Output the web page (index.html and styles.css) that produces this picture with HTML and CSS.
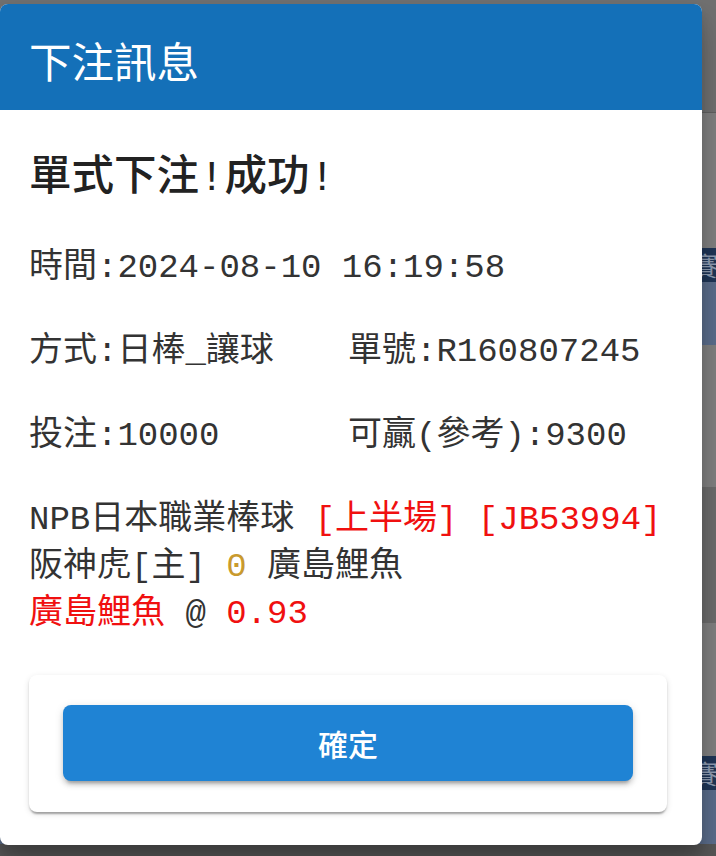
FILE: index.html
```html
<!DOCTYPE html>
<html lang="zh-Hant">

<head>
    <meta charset="UTF-8">
    <meta name="viewport" content="width=device-width, initial-scale=1.0">
    <title>下注訊息</title>
    <link rel="stylesheet" href="styles.css">
</head>

<body>
    <!-- page behind the overlay -->
    <div class="page">
        <div class="band band-top"></div>
        <div class="band band-light"></div>
        <div class="band band-navy"><span class="band-label">賽事</span></div>
        <div class="band band-slate"></div>
        <div class="band band-light band-mid"></div>
        <div class="band band-dark"></div>
        <div class="band band-light band-low"></div>
        <div class="band band-navy"><span class="band-label">賽事</span></div>
        <div class="band band-slate band-last"></div>
        <div class="band band-bottom"></div>
    </div>

    <div class="dialog">
        <div class="dialog-title">下注訊息</div>
        <div class="dialog-content">
            <h3 class="result">單式下注!成功!</h3>
            <p class="row">時間:2024-08-10 16:19:58</p>
            <div class="row cols">
                <span>方式:日棒_讓球</span>
                <span>單號:R160807245</span>
            </div>
            <div class="row cols">
                <span>投注:10000</span>
                <span>可贏(參考):9300</span>
            </div>
            <div class="row match">
                NPB日本職業棒球 <span class="red">[上半場]</span> <span class="red">[JB53994]</span><br>
                阪神虎[主] <span class="gold">0</span> 廣島鯉魚<br>
                <span class="red">廣島鯉魚</span> @ <span class="red">0.93</span>
            </div>
            <div class="actions">
                <button class="btn-ok">確定</button>
            </div>
        </div>
    </div>
</body>

</html>
```

FILE: styles.css
```css
body {
    margin: 0;
    padding: 0;
    overflow: hidden;
    font-family: "Liberation Mono", "Noto Sans CJK TC", monospace;
    background-color: #6f6f6f;
}

.page {
    display: flex;
    flex-direction: column;
}

.band {
    display: flex;
    align-items: center;
    overflow: hidden;
}

.band-top {
    height: 112px;
    background-color: #6f6f6f;
    border-bottom: 1px solid #5f5f5f;
}

.band-light {
    height: 135px;
    background-color: #7f7f7f;
}

.band-mid {
    height: 142px;
}

.band-low {
    height: 133px;
}

.band-navy {
    height: 34px;
    background-color: #1f3556;
}

.band-slate {
    height: 63px;
    background-color: #5a6c8a;
}

.band-last {
    height: 54px;
}

.band-dark {
    height: 136px;
    background-color: #6b6b6b;
}

.band-bottom {
    height: 20px;
    background-color: #575757;
}

.band-label {
    padding-left: 692px;
    font-family: "Noto Sans CJK TC", sans-serif;
    font-size: 26px;
    line-height: 34px;
    white-space: nowrap;
    color: #8e9bb0;
}

.dialog {
    position: absolute;
    top: 4px;
    left: 0;
    width: 702px;
    height: 841px;
    box-sizing: border-box;
    background-color: #fff;
    border-radius: 8px;
    overflow: hidden;
    box-shadow: 0 23px 30px rgba(0, 0, 0, 0.2), 0 8px 12px rgba(0, 0, 0, 0.14);
}

.dialog-title {
    display: flex;
    align-items: center;
    height: 106px;
    padding: 4px 0 0 29px;
    box-sizing: border-box;
    background-color: #1470b8;
    color: #fff;
    font-family: "Noto Sans CJK TC", sans-serif;
    font-size: 42.5px;
}

.dialog-content {
    padding: 0 35px 33px 29px;
    color: #333;
}

.result {
    margin: 43.5px 0 0;
    font-size: 42.5px;
    line-height: 51px;
    font-weight: 500;
    color: #222;
}

.row {
    margin: 37px 0 0;
    font-size: 34px;
    line-height: 47px;
}

.result + .row {
    margin-top: 40px;
}

.cols {
    display: grid;
    grid-template-columns: 1fr 1fr;
}

.red {
    color: #f01010;
}

.gold {
    color: #c99a2e;
}

.actions {
    margin-top: 37.5px;
    padding: 30px 34px 31px;
    border-radius: 8px;
    background-color: #fff;
    box-shadow: 0 4px 2px -2px rgba(0, 0, 0, 0.2), 0 2px 2px rgba(0, 0, 0, 0.14), 0 2px 6px rgba(0, 0, 0, 0.12);
}

.btn-ok {
    display: block;
    width: 100%;
    height: 76px;
    border: none;
    border-radius: 8px;
    background-color: #1f83d4;
    color: #fff;
    font-family: "Noto Sans CJK TC", sans-serif;
    font-size: 30px;
    font-weight: 500;
    box-shadow: 0 6px 3px -4px rgba(0, 0, 0, 0.2), 0 4px 5px rgba(0, 0, 0, 0.14), 0 2px 10px rgba(0, 0, 0, 0.12);
    cursor: pointer;
}
```
